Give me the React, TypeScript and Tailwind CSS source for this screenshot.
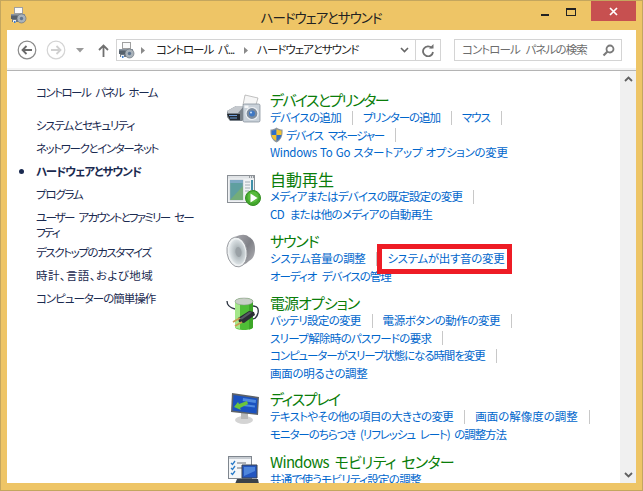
import type { ReactNode } from "react"

const cjk = "font-['Noto_Sans_CJK_JP','Noto_Sans',sans-serif] [font-feature-settings:'palt']"

function TitleIcon() {
  return (
    <svg width="17" height="17" viewBox="0 0 17 17">
      <rect x="4.500" y="0.500" width="8" height="6" fill="#fafafa" stroke="#a0a0a0" />
      <path d="M1 7h14v5H1z" fill="#56616c" />
      <path d="M1 7h14v1.500H1z" fill="#8b95a0" />
      <path d="M2 12h6v3H2z" fill="#6f7882" />
      <path d="M3 13h3v2H3z" fill="#e8eef6" />
      <path d="M4 14h1.500v2H4z" fill="#3f7fd0" />
      <circle cx="11.500" cy="11.500" r="4.500" fill="#a9b2ba" stroke="#5f6870" strokeWidth="0.600" />
      <circle cx="11.500" cy="11.500" r="1.700" fill="#5f7590" />
    </svg>
  )
}

function DevicesIcon() {
  return (
    <svg width="44" height="44" viewBox="2 -1 44 44">
      <path d="M23 5l13 3-3 10-12-3z" fill="#f6f6f6" stroke="#a6a6a6" strokeWidth="0.700" />
      <path d="M5 21l9-5h10v12l-4 3H8l-3-4z" fill="#7b838b" />
      <path d="M5 21l9-5h8l-6 7H6z" fill="#c5c9ce" />
      <path d="M5 24h13v6H8z" fill="#23282e" />
      <path d="M7 25.500h8M8 28h7" stroke="#6d9bd6" strokeWidth="1.200" />
      <rect x="21" y="14" width="17" height="18" rx="1.500" fill="#c9d1d9" stroke="#7c8792" strokeWidth="0.700" />
      <rect x="22.500" y="15.500" width="4" height="2.500" fill="#f4f6f8" />
      <circle cx="30" cy="23.500" r="6" fill="#7d8c9e" stroke="#eef1f4" strokeWidth="1.200" />
      <circle cx="30" cy="23.500" r="3" fill="#3f78c4" />
      <circle cx="29" cy="22.500" r="1" fill="#cfe2f8" />
    </svg>
  )
}

function AutoPlayIcon() {
  return (
    <svg width="44" height="44" viewBox="2 -2 44 44">
      <rect x="5.500" y="5.500" width="27" height="27" fill="#f0f2f4" stroke="#8b9096" />
      <rect x="6" y="6" width="26" height="2.500" fill="#e0e3e6" />
      <path d="M27 7h1M29 7h1M31 7h1" stroke="#4c5359" />
      <rect x="8" y="10" width="13" height="20" fill="#5f9fa0" stroke="#a9b3ba" strokeWidth="0.500" />
      <path d="M8 30l13-14v14z" fill="#74ad78" />
      <path d="M8 10h13v3H8z" fill="#7fa9c4" />
      <path d="M23 12h5M23 15h5M23 18h5M23 21h4" stroke="#a2acb4" />
      <rect x="29" y="10" width="2" height="10" fill="#3f8fa8" />
      <circle cx="31" cy="28" r="7.500" fill="#43a62c" stroke="#348f22" />
      <circle cx="31" cy="27" r="5.500" fill="#58bb3c" />
      <path d="M28.500 23.500l7 4.500-7 4.500z" fill="#fff" />
    </svg>
  )
}

function SpeakerIcon() {
  return (
    <svg width="44" height="44" viewBox="2 0 44 44">
      <defs>
        <linearGradient id="spkBack" x1="0" y1="0" x2="1" y2="1">
          <stop offset="0" stopColor="#a8a8ae" />
          <stop offset="0.500" stopColor="#7f8086" />
          <stop offset="1" stopColor="#b8b8bc" />
        </linearGradient>
        <radialGradient id="spkFace" cx="0.550" cy="0.500" r="0.650">
          <stop offset="0" stopColor="#8f979c" />
          <stop offset="0.350" stopColor="#b4bcc0" />
          <stop offset="0.800" stopColor="#dde3e6" />
          <stop offset="1" stopColor="#c4cbd0" />
        </radialGradient>
      </defs>
      <path d="M13 7c6-3 11-3 14 0 4 2 6 6 6 12s-2 10-6 12c-4 4-9 6-14 5z" fill="url(#spkBack)" />
      <ellipse cx="15" cy="22" rx="10" ry="15" transform="rotate(-8 15 22)" fill="#eef1f2" stroke="#8a8d92" strokeWidth="0.800" />
      <ellipse cx="15.500" cy="22" rx="8" ry="12.500" transform="rotate(-8 15.500 22)" fill="url(#spkFace)" />
      <ellipse cx="16.500" cy="22" rx="3" ry="5" transform="rotate(-8 16.500 22)" fill="#9aa1a6" />
    </svg>
  )
}

function PowerIcon() {
  return (
    <svg width="44" height="44" viewBox="2 0 44 44">
      <path d="M5 9c0 5 4 7 8 8M31 14c4 0 6 2 5 7-1 4-3 6-6 6" fill="none" stroke="#2c3440" strokeWidth="1.300" />
      <path d="M13 10c0-3 4-4 9-4s9 1 9 4v25c0 2-4 3-9 3s-9-1-9-3z" fill="#4fbe36" />
      <path d="M13 10h5v27c-3-.5-5-1-5-2z" fill="#a4e78a" />
      <path d="M27 10h4v25c0 1-2 2-4 2.500z" fill="#3da628" />
      <ellipse cx="22" cy="9.500" rx="9" ry="3.500" fill="#c8cfc6" stroke="#8d948d" strokeWidth="0.500" />
      <path d="M16 26l11-7 5 1 1 3-11 8-5-1z" fill="#2a2e34" />
      <path d="M17 27l10-7 3 .5-10 7z" fill="#565c64" />
      <path d="M11 30l7-4M13 34l7-4" stroke="#c99a50" strokeWidth="1.800" />
    </svg>
  )
}

function MonitorIcon() {
  return (
    <svg width="44" height="44" viewBox="2 0 44 44">
      <ellipse cx="22" cy="32" rx="9" ry="4" fill="#d4d4d4" />
      <path d="M19 25h7v6h-7z" fill="#b8b8b8" />
      <path d="M10 5l27 4-1 18-27-3z" fill="#5d6269" />
      <path d="M11.500 7l24 3.500-1 15-24-3z" fill="#1b52c0" />
      <path d="M21 10l13 2-.3 3-13-2zM21 16l12 1.500-.2 2-12-1.500z" fill="#4f8ae0" />
      <path d="M12 19l4-5 1 2 8-3 1 3-8 4 1 2z" fill="#6cc53b" />
    </svg>
  )
}

function MobilityIcon() {
  return (
    <svg width="44" height="44" viewBox="2 63 44 44">
      <rect x="6.500" y="68.500" width="23" height="22" fill="#f4f6f8" stroke="#7f868e" />
      <rect x="7" y="69" width="22" height="2" fill="#c7ccd2" />
      <path d="M9 75l1.500 1.500L13 73M9 80l1.500 1.500L13 78M9 85l1.500 1.500L13 83" fill="none" stroke="#2a7bc8" strokeWidth="1.300" />
      <path d="M15 75h9M15 80h6" stroke="#6a7078" />
      <path d="M20 77h15v13H20z" fill="#2456c0" stroke="#3a4350" />
      <path d="M22 79h11v4l-11 5z" fill="#4f86dc" />
      <path d="M15 91h21l1 5H13z" fill="#3b4149" />
    </svg>
  )
}

function ShieldIcon() {
  return (
    <svg width="15" height="16" viewBox="0 0 15 16">
      <path d="M7.500.5c2 1.500 4 2 6 2 .5 6-1 10.500-6 13-5-2.500-6.500-7-6-13 2 0 4-.5 6-2z" fill="#8d949c" />
      <path d="M7.500 2v6H2.700c0-1.500-.2-3 0-4.500 2 0 3.300-.5 4.800-1.500z" fill="#2f6fc9" />
      <path d="M7.500 2c1.500 1 2.800 1.500 4.800 1.500.2 1.500.2 3 0 4.500H7.500z" fill="#f4c22e" />
      <path d="M2.700 8h4.800v6C4.500 12.500 3 10.500 2.700 8z" fill="#f4c22e" />
      <path d="M7.500 8h4.800c-.3 2.500-1.800 4.500-4.800 6z" fill="#2f6fc9" />
    </svg>
  )
}

function Link({ children, sep, cls = "tracking-[-0.7px]" }: { children: ReactNode; sep?: boolean; cls?: string }) {
  return (
    <span className="flex items-center">
      <span className={`text-[11.500px] leading-[17px] text-[#0066cc] whitespace-nowrap ${cls}`}>{children}</span>
      {sep && <span className="w-px h-[14px] bg-[#c8c8c8] ml-[11px] mr-[10px]" />}
    </span>
  )
}

function Section({ icon, title, titleCls, children, className }: { icon: ReactNode; title: string; titleCls: string; children: ReactNode; className: string }) {
  return (
    <div className={`flex ${className}`}>
      <div className="w-[46px] shrink-0">{icon}</div>
      <div className="flex flex-col">
        <div className={`leading-[20px] pt-[1px] mb-[-1px] text-[#0a7d0a] whitespace-nowrap ${titleCls}`}>{title}</div>
        {children}
      </div>
    </div>
  )
}

function Row({ children }: { children: ReactNode }) {
  return <div className="flex items-center h-[17.500px]">{children}</div>
}

function Nav({ children, active, cls = "tracking-[-1.200px]" }: { children: ReactNode; active?: boolean; cls?: string }) {
  return (
    <div className={`relative text-[11.500px] leading-[15px] text-[#1a2a50] whitespace-nowrap ${cls} ${active ? "font-bold" : ""}`}>
      {active && <span className="absolute left-[-17px] top-[5px] w-[5px] h-[5px] rounded-full bg-[#1a2a50]" />}
      {children}
    </div>
  )
}

export default function App() {
  return (
    <div className={`w-[643px] h-[491px] flex flex-col bg-[#eec566] border border-[#c4a65e] overflow-hidden ${cjk}`}>
      {/* title bar */}
      <div className="h-[29px] shrink-0 flex items-start">
        <div className="ml-[9px] mt-[6px]">
          <TitleIcon />
        </div>
        <div className="flex-1 text-center text-[13.500px] tracking-[-1px] leading-[20px] mt-[6px] text-[#222] pl-[84px]">ハードウェアとサウンド</div>
        <div className="w-[27px] flex justify-center mt-[13px]">
          <span className="block w-[8px] h-[2px] bg-[#222]" />
        </div>
        <div className="w-[26px] flex justify-center mt-[7px] mr-[7px]">
          <span className="block w-[10px] h-[8px] border border-t-2 border-[#222]" />
        </div>
        <div className="w-[45px] h-[20px] bg-[#c75050] flex items-center justify-center">
          <svg width="9" height="9" viewBox="0 0 9 9">
            <path d="M1 1l7 7M8 1l-7 7" stroke="#fff" strokeWidth="1.700" />
          </svg>
        </div>
        <div className="w-[6px]" />
      </div>

      <div className="flex-1 min-h-0 mx-[6px] mb-[7px] bg-white flex flex-col overflow-hidden">
        {/* toolbar */}
        <div className="h-[41px] shrink-0 flex items-center border-b border-[#b4b4b4] shadow-[inset_0_-2px_0_#f3f3f3]">
          <svg className="ml-[10px] shrink-0" width="20" height="20" viewBox="0 0 20 20">
            <circle cx="10" cy="10" r="8.800" fill="#fff" stroke="#8a8a8a" strokeWidth="1.200" />
            <path d="M15 10H6M9.500 6L5.500 10l4 4" fill="none" stroke="#6a6a6a" strokeWidth="1.800" />
          </svg>
          <svg className="ml-[9px] shrink-0" width="20" height="20" viewBox="0 0 20 20">
            <circle cx="10" cy="10" r="8.800" fill="#fff" stroke="#d4d4d4" strokeWidth="1.200" />
            <path d="M5 10h9M10.500 6l4 4-4 4" fill="none" stroke="#d0d0d0" strokeWidth="1.800" />
          </svg>
          <svg className="ml-[10px] shrink-0" width="8" height="5" viewBox="0 0 8 5">
            <path d="M0 0h8L4 4.500z" fill="#9a9a9a" />
          </svg>
          <svg className="ml-[14px] shrink-0" width="11" height="13" viewBox="0 0 11 13">
            <path d="M5.500 13V2M1 6l4.500-4.500L10 6" fill="none" stroke="#707070" strokeWidth="1.800" />
          </svg>
          <div className="ml-[7px] h-[22px] w-[325px] border border-[#d4d4d4] flex items-center shrink-0">
            <div className="ml-[1px]"><TitleIcon /></div>
            <svg className="ml-[6px]" width="4" height="7" viewBox="0 0 4 7"><path d="M0 0l4 3.500L0 7z" fill="#8a8a8a" /></svg>
            <span className="ml-[11px] w-[80px] text-[11.500px] tracking-[-1px] [word-spacing:3px] text-[#222] whitespace-nowrap">コントロール パ...</span>
            <svg className="ml-[8px]" width="4" height="7" viewBox="0 0 4 7"><path d="M0 0l4 3.500L0 7z" fill="#8a8a8a" /></svg>
            <span className="ml-[9px] text-[11.500px] tracking-[-1px] text-[#222] whitespace-nowrap">ハードウェアとサウンド</span>
            <svg className="ml-auto mr-[6px]" width="9" height="6" viewBox="0 0 9 6"><path d="M1 1l3.500 3.500L8 1" fill="none" stroke="#666" strokeWidth="1.600" /></svg>
            <span className="w-px h-full bg-[#d4d4d4]" />
            <svg className="mx-[6px]" width="12" height="13" viewBox="0 0 12 13">
              <path d="M9.800 4A5 5 0 1 0 11 8" fill="none" stroke="#707070" strokeWidth="1.800" />
              <path d="M7 4.500h4.500V0z" fill="#707070" />
            </svg>
          </div>
          <div className="ml-[13px] h-[22px] w-[168px] border border-[#d4d4d4] flex items-center shrink-0">
            <span className="ml-[7px] text-[11.500px] tracking-[-0.900px] [word-spacing:4px] text-[#6d6d6d] whitespace-nowrap">コントロール パネルの検索</span>
            <svg className="ml-auto mr-[6px]" width="13" height="13" viewBox="0 0 13 13">
              <circle cx="8" cy="5" r="3.500" fill="none" stroke="#7a7a7a" strokeWidth="1.800" />
              <path d="M5.500 7.500L1.500 11.500" stroke="#7a7a7a" strokeWidth="2.200" />
            </svg>
          </div>
        </div>

        {/* body */}
        <div className="flex-1 min-h-0 flex">
          <div className="w-[217px] shrink-0 pl-[29px] pt-[14px] flex flex-col">
            <Nav cls="tracking-[-1.500px] [word-spacing:4px]">コントロール パネル ホーム</Nav>
            <div className="h-[18px]" />
            <div className="flex flex-col gap-[8px]">
              <Nav>システムとセキュリティ</Nav>
              <Nav cls="tracking-[-1.400px]">ネットワークとインターネット</Nav>
              <Nav active cls="tracking-[-1px]">ハードウェアとサウンド</Nav>
              <Nav>プログラム</Nav>
              <Nav cls="tracking-[-1.750px] [word-spacing:4px] mb-[-3px]">ユーザー アカウントとファミリー セー<br />フティ</Nav>
              <Nav cls="tracking-[-1.400px]">デスクトップのカスタマイズ</Nav>
              <Nav cls="tracking-[0.400px]">時計、言語、および地域</Nav>
              <Nav cls="tracking-[-1px]">コンピューターの簡単操作</Nav>
            </div>
          </div>

          <div className="flex-1 min-w-0 overflow-hidden pt-[18px]">
            <Section icon={<DevicesIcon />} title="デバイスとプリンター" titleCls="text-[15px] tracking-[-1.700px]" className="h-[79px]">
              <Row><Link sep>デバイスの追加</Link><Link sep cls="tracking-[-1.100px]">プリンターの追加</Link><Link sep cls="tracking-[-1px]">マウス</Link></Row>
              <Row>
                <span className="ml-[-1px] mr-[2px]"><ShieldIcon /></span>
                <Link sep cls="tracking-[-1.300px] [word-spacing:4px]">デバイス マネージャー</Link>
              </Row>
              <Row><Link cls="tracking-[-0.300px] [word-spacing:1px]">Windows To Go スタートアップ オプションの変更</Link></Row>
            </Section>
            <Section icon={<AutoPlayIcon />} title="自動再生" titleCls="text-[16px]" className="h-[62px]">
              <Row><Link sep>メディアまたはデバイスの既定設定の変更</Link></Row>
              <Row><Link cls="tracking-[-0.700px] [word-spacing:4px]">CD または他のメディアの自動再生</Link></Row>
            </Section>
            <Section icon={<SpeakerIcon />} title="サウンド" titleCls="text-[15px] tracking-[-1.100px]" className="h-[62px]">
              <Row>
                <Link sep cls="tracking-[-0.400px]">システム音量の調整</Link>
                <span className="relative">
                  <span className="absolute left-[-10px] top-[-6px] w-[135px] h-[30px] border-[5px] border-[#ee1c25]" />
                  <Link cls="tracking-[-0.330px]">システムが出す音の変更</Link>
                </span>
              </Row>
              <Row><Link cls="tracking-[-1px] [word-spacing:4px]">オーディオ デバイスの管理</Link></Row>
            </Section>
            <Section icon={<PowerIcon />} title="電源オプション" titleCls="text-[15px] tracking-[-0.950px]" className="h-[96px]">
              <Row><Link sep>バッテリ設定の変更</Link><Link sep cls="tracking-[-0.450px]">電源ボタンの動作の変更</Link></Row>
              <Row><Link sep>スリープ解除時のパスワードの要求</Link></Row>
              <Row><Link sep cls="tracking-[-1.100px]">コンピューターがスリープ状態になる時間を変更</Link></Row>
              <Row><Link cls="tracking-[-0.300px]">画面の明るさの調整</Link></Row>
            </Section>
            <Section icon={<MonitorIcon />} title="ディスプレイ" titleCls="text-[15px] tracking-[-1.450px]" className="h-[63px]">
              <Row><Link sep cls="tracking-[-0.650px]">テキストやその他の項目の大きさの変更</Link><Link sep cls="tracking-[0px]">画面の解像度の調整</Link></Row>
              <Row><Link cls="tracking-[-1.050px] [word-spacing:3px]">モニターのちらつき (リフレッシュ レート) の調整方法</Link></Row>
            </Section>
            <Section icon={<MobilityIcon />} title="Windows モビリティ センター" titleCls="text-[15px] tracking-[-0.700px] [word-spacing:3px]" className="h-[40px]">
              <Row><Link>共通で使うモビリティ設定の調整</Link></Row>
            </Section>
          </div>

          {/* scrollbar */}
          <div className="w-[16px] shrink-0 bg-[#f0f0f0] flex flex-col items-center justify-between py-[5px]">
            <svg width="9" height="6" viewBox="0 0 9 6"><path d="M1 5l3.500-3.500L8 5" fill="none" stroke="#606060" strokeWidth="1.800" /></svg>
            <svg width="9" height="6" viewBox="0 0 9 6"><path d="M1 1l3.500 3.500L8 1" fill="none" stroke="#606060" strokeWidth="1.800" /></svg>
          </div>
        </div>
      </div>
    </div>
  )
}
